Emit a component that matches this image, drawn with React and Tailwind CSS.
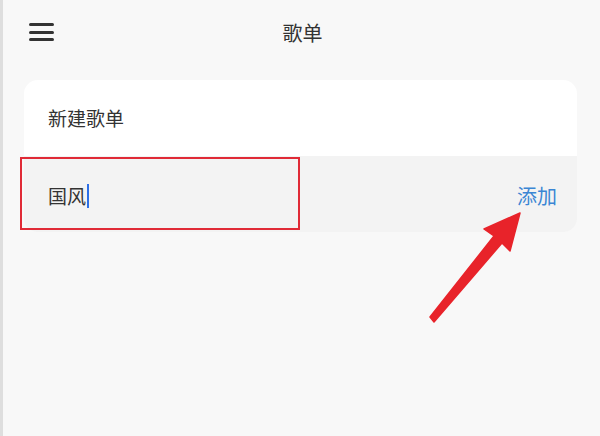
import React from 'react';

const font = { fontFamily: '"Noto Sans CJK SC", "Noto Sans", sans-serif' };

const MenuIcon = () => (
  <div className="flex flex-col gap-[4.5px] w-[25px]">
    <span className="block h-[3px] rounded-full bg-[#333]" />
    <span className="block h-[3px] rounded-full bg-[#333]" />
    <span className="block h-[3px] rounded-full bg-[#333]" />
  </div>
);

const App = () => {
  return (
    <div
      className="relative w-[600px] h-[436px] overflow-hidden bg-[#f8f8f8] border-l-[3px] border-[#dedede] text-[#333]"
      style={font}
    >
      {/* Header */}
      <div className="grid grid-cols-[1fr_auto_1fr] items-center h-[66px]">
        <div className="pl-[26px] pb-[2px]">
          <MenuIcon />
        </div>
        <h1 className="text-[20px] leading-none pl-[2px]">歌单</h1>
        <div />
      </div>

      {/* Card */}
      <div className="mt-[14px] ml-[21px] mr-[23px] rounded-[14px] overflow-hidden">
        <div className="h-[76px] bg-white flex items-center pl-6 text-[19px]">
          新建歌单
        </div>
        <div className="h-[76px] bg-[#f3f3f3] flex items-center justify-between pl-6 pr-[20px] pt-[4px]">
          <div className="flex items-center text-[19px]">
            <span>国风</span>
            <span className="block w-[2px] h-[24px] bg-[#2d6fe6] ml-[1px]" />
          </div>
          <button className="text-[20px] text-[#3b86d4]">添加</button>
        </div>
      </div>

      {/* Annotation: red highlight box */}
      <div className="absolute left-[17px] top-[157px] w-[280px] h-[73px] border-2 border-[#e02a36]" />

      {/* Annotation: arrow */}
      <svg className="absolute left-0 top-0" width="600" height="436" viewBox="0 0 600 436">
        <polygon
          points="517,213 481,229 491,236 427,317 431,322 499,243 507,251"
          fill="#e8232a"
          strokeLinejoin="round"
          stroke="#e8232a"
          strokeWidth="1.5"
        />
      </svg>
    </div>
  );
};

export default App;
